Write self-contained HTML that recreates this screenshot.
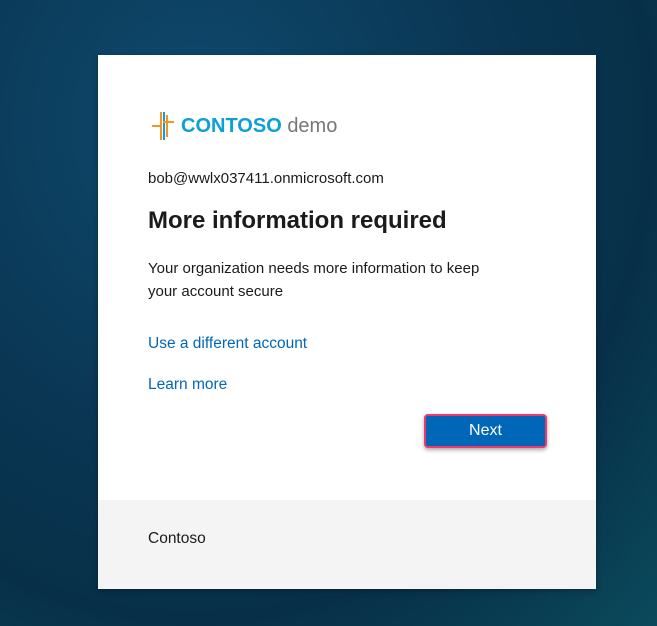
<!DOCTYPE html>
<html><head><style>
html,body{margin:0;padding:0;width:657px;height:626px;overflow:hidden;}
body{background:radial-gradient(ellipse at 30% 20%,#0f4a6e 0%,#0a3654 45%,#073048 70%,#0b4a5c 100%);font-family:"Liberation Sans",sans-serif;position:relative;}
.card{position:absolute;left:98px;top:55px;width:498px;height:534px;background:#fff;box-shadow:0 2px 6px rgba(0,0,0,.3);}
.foot{position:absolute;left:0;top:445px;width:498px;height:89px;background:#f4f4f4;}
.t{position:absolute;color:#1b1b1b;white-space:nowrap;}
a{color:#0067b8;text-decoration:none;}
.btn{position:absolute;left:424px;top:414px;width:119px;height:30px;background:#0067b8;color:#fff;font-size:16px;line-height:30px;text-align:center;border:2px solid #f0386b;border-radius:4px;box-shadow:0 2px 4px rgba(0,0,0,.35);}
</style></head><body>
<div class="card">
<div class="foot"></div>
</div>
<svg style="position:absolute;left:152px;top:112px" width="22" height="28" viewBox="0 0 22 28">
<rect x="8" y="0" width="2" height="28" fill="#f7941d"/>
<rect x="11" y="0" width="2" height="28" fill="#00a4e4"/>
<rect x="0" y="13" width="10" height="2" fill="#f7941d"/>
<rect x="11" y="9" width="11" height="2" fill="#f7941d"/>
<rect x="14" y="3" width="2" height="22" fill="#f7941d"/>
</svg>
<div class="t" style="left:181px;top:115px;font-size:20px;font-weight:bold;color:#0d9fd8">CONTOSO <span style="font-weight:normal;color:#777">demo</span></div>
<div class="t" style="left:148px;top:170px;font-size:15px">bob@wwlx037411.onmicrosoft.com</div>
<div class="t" style="left:148px;top:207px;font-size:24px;font-weight:bold;color:#1b1b1b">More information required</div>
<div class="t" style="left:148px;top:257px;font-size:15px;line-height:23px;white-space:normal;width:360px">Your organization needs more information to keep your account secure</div>
<div class="t" style="left:148px;top:335px;font-size:15.5px"><a>Use a different account</a></div>
<div class="t" style="left:148px;top:376px;font-size:15.5px"><a>Learn more</a></div>
<div class="btn">Next</div>
<div class="t" style="left:148px;top:530px;font-size:15.5px">Contoso</div>
</body></html>
